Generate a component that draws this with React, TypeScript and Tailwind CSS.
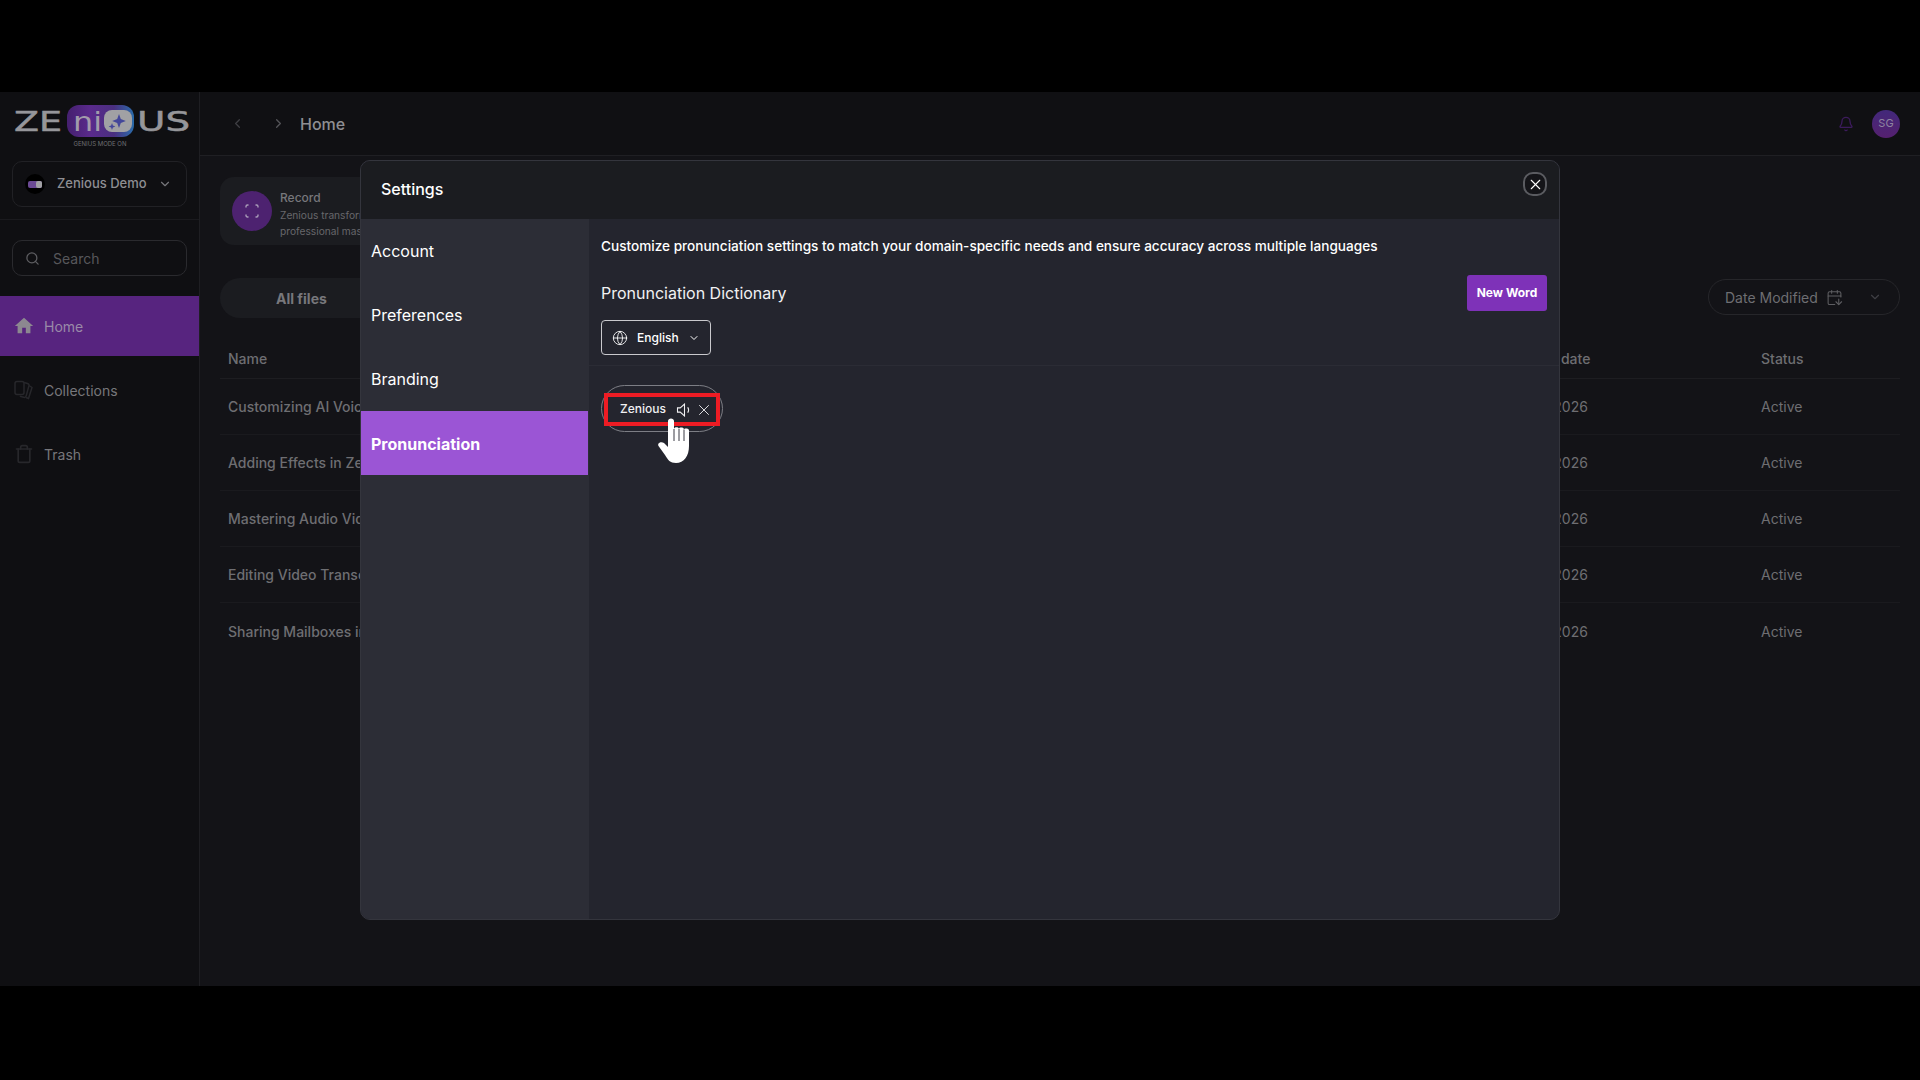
import { Bell, CalendarArrowDown, ChevronDown, ChevronLeft, ChevronRight, Globe, Search, Trash, X } from "lucide-react";

const files = [
  "Customizing AI Voices",
  "Adding Effects in Zenious",
  "Mastering Audio Video",
  "Editing Video Transcripts",
  "Sharing Mailboxes in Zenious",
];

const settingsTabs = ["Account", "Preferences", "Branding", "Pronunciation"];

function Logo() {
  return (
    <svg width="199" height="69" viewBox="0 0 199 69" className="block">
      <defs>
        <linearGradient id="pill" x1="0" x2="1" y1="0" y2="0">
          <stop offset="0" stopColor="#45206f" />
          <stop offset="0.35" stopColor="#5a2a8c" />
          <stop offset="0.7" stopColor="#4a2f80" />
          <stop offset="1" stopColor="#2a6cab" />
        </linearGradient>
      </defs>
      <rect x="67" y="13" width="67" height="32" rx="12" fill="url(#pill)" />
      <rect x="104" y="18" width="28" height="22" rx="8" fill="#a1a1a4" />
      <path d="M119 22l1.800 5 5 2-5 2-1.800 5-1.800-5-5-2 5-2z" fill="#44479a" />
      <path d="M112 31l.9 2.500 2.500 1-2.500 1-.9 2.500-.9-2.500-2.500-1 2.500-1z" fill="#44479a" />
      <text x="14" y="39" fontFamily="'DejaVu Sans', sans-serif" fontSize="27" fill="#96969a" stroke="#96969a" strokeWidth="0.5" textLength="48" lengthAdjust="spacingAndGlyphs">ZE</text>
      <text x="73" y="39" fontFamily="'DejaVu Sans', sans-serif" fontSize="27" fill="#a29bab" textLength="29" lengthAdjust="spacingAndGlyphs">ni</text>
      <text x="137" y="39" fontFamily="'DejaVu Sans', sans-serif" fontSize="27" fill="#96969a" stroke="#96969a" strokeWidth="0.5" textLength="53" lengthAdjust="spacingAndGlyphs">US</text>
      <text x="100" y="54" textAnchor="middle" fontFamily="Inter, sans-serif" fontSize="6" fill="#6f6f74">GENIUS MODE ON</text>
    </svg>
  );
}

function Sidebar() {
  return (
    <aside className="flex w-[200px] shrink-0 flex-col border-r border-[#1e1e22] bg-[#0f0f12]">
      <div className="h-[69px]">
        <Logo />
      </div>
      <div className="border-b border-[#1a1a1e] px-3 pb-[12px]">
        <div className="flex h-[46px] items-center rounded-[10px] border border-[#212125] pl-3 pr-[14px]">
          <span className="flex h-5 w-5 items-center justify-center rounded-full bg-black">
            <span className="flex h-[7px] w-[14px] justify-end rounded-[2px] bg-[#6b4a94]">
              <span className="h-[7px] w-[6px] rounded-[2px] bg-[#a1a1a4]" />
            </span>
          </span>
          <span className="ml-3 flex-1 text-[13px] font-medium text-[#8e8e92]">Zenious Demo</span>
          <ChevronDown size={14} className="text-[#77777b]" />
        </div>
      </div>
      <div className="px-3 py-5">
        <div className="flex h-9 items-center rounded-[10px] border border-[#2a2a2e] pl-3">
          <Search size={15} className="text-[#5e5e62]" />
          <span className="ml-[13px] text-[14px] text-[#57575b]">Search</span>
        </div>
      </div>
      <nav className="flex flex-col gap-[4px]">
        <div className="flex h-[60px] items-center bg-[#57247f] pl-[13px] text-[14px] text-[#9a8aa8]">
          <svg width="22" height="22" viewBox="0 0 24 24" fill="#8c8890">
            <path d="M12 3 2 12h3v8h5v-6h4v6h5v-8h3z" />
          </svg>
          <span className="ml-[9px]">Home</span>
        </div>
        <div className="flex h-[60px] items-center pl-[14px] text-[14px] text-[#77777b]">
          <svg width="20" height="20" viewBox="0 0 20 20" fill="none" stroke="#27272b" strokeWidth="1.500">
            <rect x="1" y="1.500" width="9" height="13" rx="2" />
            <path d="M10 2.500l3.500 1a2 2 0 0 1 1.400 2.400l-2.700 10a2 2 0 0 1-2.400 1.400l-4-1.100" />
            <path d="M15 5.500l3 2-3.500 11-2.500-1" />
          </svg>
          <span className="ml-[10px]">Collections</span>
        </div>
        <div className="flex h-[60px] items-center pl-[14px] text-[14px] text-[#77777b]">
          <Trash size={20} className="text-[#27272b]" />
          <span className="ml-[10px]">Trash</span>
        </div>
      </nav>
    </aside>
  );
}

function Background() {
  return (
    <main className="flex min-w-0 flex-1 flex-col bg-[#131317]">
      <header className="flex h-[64px] items-center border-b border-[#1f1f23] bg-[#101013] pl-[30px] pr-5">
        <ChevronLeft size={15} className="text-[#3f3f44]" />
        <ChevronRight size={15} className="ml-[26px] text-[#55555a]" />
        <span className="ml-[14px] text-[16px] font-medium text-[#8e8e92]">Home</span>
        <Bell size={16} className="ml-auto text-[#3c1b5c]" />
        <span className="ml-[18px] flex h-7 w-7 items-center justify-center rounded-full bg-gradient-to-b from-[#42287a] to-[#55206f] text-[11px] text-[#8f84a0]">SG</span>
      </header>
      <div className="flex flex-1 flex-col px-5 pt-[21px]">
        <div className="flex h-[68px] w-[400px] items-center rounded-[14px] bg-[#1b1c20] pl-3">
          <span className="flex h-10 w-10 items-center justify-center rounded-full bg-[#4d2270]">
            <svg width="14" height="14" viewBox="0 0 14 14" fill="none" stroke="#a99cb8" strokeWidth="1.400">
              <path d="M1 3.500V2.500A1.500 1.500 0 0 1 2.500 1H3.500M10.500 1h1A1.500 1.500 0 0 1 13 2.500V3.500M13 10.500v1a1.500 1.500 0 0 1-1.500 1.500H10.500M3.500 13H2.500A1.500 1.500 0 0 1 1 11.500V10.500" />
            </svg>
          </span>
          <div className="ml-2 pt-[7px]">
            <div className="text-[12px] font-medium leading-[16px] text-[#77777b]">Record</div>
            <div className="mt-[1px] text-[10.2px] leading-[16px] text-[#67676b]">Zenious transforms your</div>
            <div className="text-[10.2px] leading-[16px] text-[#67676b]">professional master</div>
          </div>
        </div>
        <div className="mt-[33px] flex h-[40px] items-start justify-between">
          <div className="flex h-10 w-[300px] items-center rounded-full bg-[#1b1c20] pl-14 text-[14px] font-bold text-[#77777b]">All files</div>
          <div className="mt-[1px] flex h-9 w-[192px] items-center rounded-full border border-[#26262a] pl-4 pr-[17px] text-[14px] text-[#6e6e72]">
            <span>Date Modified</span>
            <CalendarArrowDown size={17} strokeWidth={1.500} className="ml-2 text-[#5e5e62]" />
            <ChevronDown size={14} className="ml-auto text-[#3f3f44]" />
          </div>
        </div>
        <div className="mt-[21px] flex h-[40px] items-center border-b border-[#1d1d21] px-2 text-[14px] font-medium text-[#6e6e72]">
          <span className="flex-1">Name</span>
          <span className="w-[263px]">Modified date</span>
          <span className="w-[131px]">Status</span>
        </div>
        {files.map((name, index) => (
          <div
            key={name}
            className={
              index < files.length - 1
                ? "flex h-[56px] items-center border-b border-[#1a1a1e] px-2 text-[14px] font-medium text-[#6e6e72]"
                : "flex h-[56px] items-center px-2 text-[14px] font-medium text-[#6e6e72]"
            }
          >
            <span className="flex-1">{name}</span>
            <span className="w-[263px] pl-[5px] font-normal">Jan 12, 2026</span>
            <span className="w-[131px] font-normal">Active</span>
          </div>
        ))}
      </div>
    </main>
  );
}

function HandCursor() {
  return (
    <svg width="36" height="48" viewBox="0 0 36 48" className="absolute left-[54px] top-[30px]">
      <path
        d="M12 5C12 1.500 18 1.500 18 5V13C18 10.500 23 10.500 23 13C23 11 28 11 28 13.500C28 12 33 12 33 14.500V30C33 40 28 47 20 47C14 47 12 44 9 39L2.500 30C1 27 5 25 8 27L12 31Z"
        fill="#fff"
      />
      <path d="M18 13V25M23 13V25M28 13.500V25" fill="none" stroke="#3a3b44" strokeWidth="1" />
    </svg>
  );
}

function SettingsModal() {
  return (
    <div className="absolute left-[360px] top-[68px] flex h-[760px] w-[1200px] flex-col overflow-hidden rounded-[10px] border border-[#34353d] bg-[#24252e]">
      <div className="flex h-[58px] shrink-0 items-start justify-between bg-[#1b1c20] pl-5 pr-3">
        <span className="mt-[16px] text-[16px] font-medium leading-6 text-white">Settings</span>
        <button className="mt-[11px] flex h-6 w-6 items-center justify-center rounded-[10px] border-2 border-[#5a5b60] bg-[#141418] text-white">
          <X size={17} strokeWidth={1.500} />
        </button>
      </div>
      <div className="flex min-h-0 flex-1">
        <div className="w-[228px] shrink-0 bg-[#2c2d36] pr-[1px]">
          {settingsTabs.map((tab) => (
            <div
              key={tab}
              className={
                tab === "Pronunciation"
                  ? "flex h-[64px] items-center bg-[#9b55d5] pl-[10px] pt-[1px] text-[16px] font-bold text-white"
                  : "flex h-[64px] items-center pl-[10px] text-[16px] text-white"
              }
            >
              {tab}
            </div>
          ))}
        </div>
        <div className="flex min-w-0 flex-1 flex-col">
          <div className="border-b border-[#2b2c35] pb-[10px] pl-3 pr-3 pt-[17px]">
            <p className="text-[13.6px] font-medium leading-[20px] text-white">
              Customize pronunciation settings to match your domain-specific needs and ensure accuracy across multiple languages
            </p>
            <div className="mt-[19px] flex h-9 items-center justify-between">
              <span className="text-[16px] text-[#f1f1f3]">Pronunciation Dictionary</span>
              <button className="flex h-9 w-20 items-center justify-center rounded-[3px] bg-[#7e32b8] text-[12px] font-bold text-white">New Word</button>
            </div>
            <div className="mt-[9px] flex h-[35px] w-[110px] items-center rounded-[4px] border border-[#c9c9cd] pl-[10px] text-white">
              <Globe size={16} strokeWidth={1.300} />
              <span className="ml-[9px] text-[12px] font-medium">English</span>
              <ChevronDown size={12} className="ml-[9px]" />
            </div>
          </div>
          <div className="pl-3 pt-[19px]">
            <div className="relative h-[47px] w-[122px] rounded-full border border-[#7d7e85]">
              <div className="absolute left-[2px] top-[7px] flex h-[33px] w-[116px] items-center border-4 border-[#ed1c24] pl-[12px] text-[#f0f0f2]">
                <span className="pb-[2px] text-[12px] font-medium">Zenious</span>
                <svg width="17" height="14" viewBox="0 0 15 13" fill="none" stroke="currentColor" strokeWidth="1" className="ml-[10px]">
                  <path d="M1 4.500h2.500L7.500 1v11L3.500 8.500H1z" />
                  <path d="M10.500 4c1 1.500 1 3.500 0 5" />
                </svg>
                <X size={18} strokeWidth={1.200} className="ml-[2px]" />
              </div>
              <HandCursor />
            </div>
          </div>
        </div>
      </div>
    </div>
  );
}

export default function App() {
  return (
    <div className="flex h-screen flex-col bg-black font-['Inter',sans-serif]">
      <div className="h-[92px] shrink-0" />
      <div className="relative flex h-[894px] shrink-0 overflow-hidden">
        <Sidebar />
        <Background />
        <SettingsModal />
      </div>
    </div>
  );
}
